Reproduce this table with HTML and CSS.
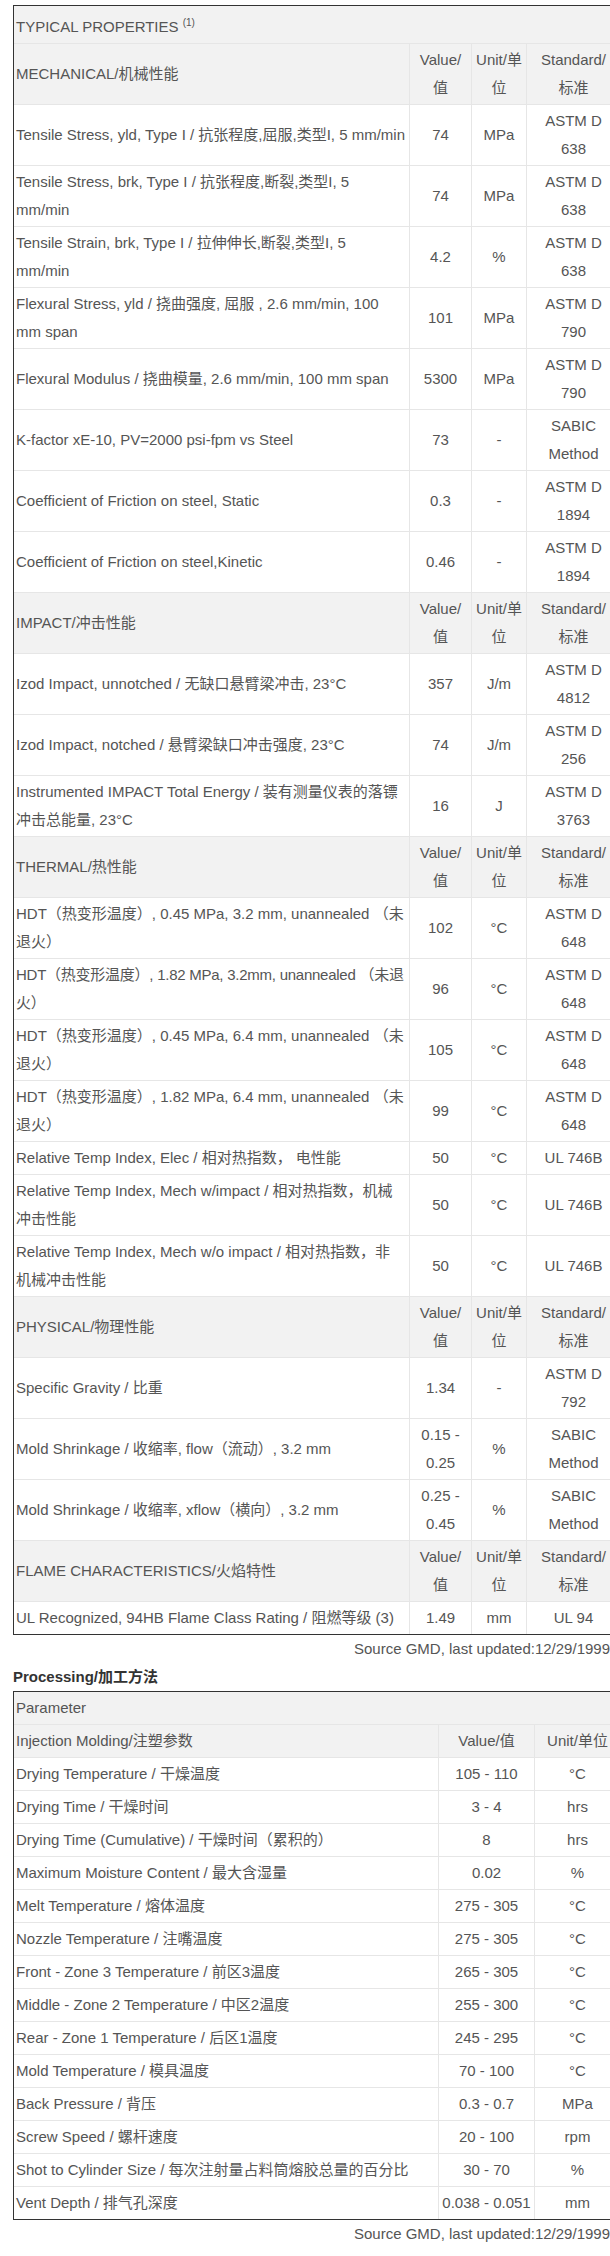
FILE: index.html
```html
<!DOCTYPE html>
<html lang="zh-CN">
<head>
  <meta charset="UTF-8">
  <meta name="viewport" content="width=device-width, initial-scale=1.0">
  <title>Typical Properties</title>
  <link rel="stylesheet" href="styles.css">
</head>
<body>
  <div class="ficha">
    <table class="tabela props">
      <colgroup>
        <col class="c-desc">
        <col class="c-val">
        <col class="c-unit">
        <col class="c-std">
      </colgroup>
      <tr class="titulo">
        <th colspan="4">TYPICAL PROPERTIES <sup>(1)</sup></th>
      </tr>
      <tr class="secao">
        <th>MECHANICAL/机械性能</th>
        <th>Value/<br>值</th>
        <th>Unit/单<br>位</th>
        <th>Standard/<br>标准</th>
      </tr>
      <tr><td>Tensile Stress, yld, Type I / 抗张程度,屈服,类型I, 5 mm/min</td><td>74</td><td>MPa</td><td>ASTM D<br>638</td></tr>
      <tr><td>Tensile Stress, brk, Type I / 抗张程度,断裂,类型I, 5<br>mm/min</td><td>74</td><td>MPa</td><td>ASTM D<br>638</td></tr>
      <tr><td>Tensile Strain, brk, Type I / 拉伸伸长,断裂,类型I, 5<br>mm/min</td><td>4.2</td><td>%</td><td>ASTM D<br>638</td></tr>
      <tr><td>Flexural Stress, yld / 挠曲强度, 屈服 , 2.6 mm/min, 100<br>mm span</td><td>101</td><td>MPa</td><td>ASTM D<br>790</td></tr>
      <tr><td>Flexural Modulus / 挠曲模量, 2.6 mm/min, 100 mm span</td><td>5300</td><td>MPa</td><td>ASTM D<br>790</td></tr>
      <tr><td>K-factor xE-10, PV=2000 psi-fpm vs Steel</td><td>73</td><td>-</td><td>SABIC<br>Method</td></tr>
      <tr><td>Coefficient of Friction on steel, Static</td><td>0.3</td><td>-</td><td>ASTM D<br>1894</td></tr>
      <tr><td>Coefficient of Friction on steel,Kinetic</td><td>0.46</td><td>-</td><td>ASTM D<br>1894</td></tr>

      <tr class="secao">
        <th>IMPACT/冲击性能</th>
        <th>Value/<br>值</th>
        <th>Unit/单<br>位</th>
        <th>Standard/<br>标准</th>
      </tr>
      <tr><td>Izod Impact, unnotched / 无缺口悬臂梁冲击, 23°C</td><td>357</td><td>J/m</td><td>ASTM D<br>4812</td></tr>
      <tr><td>Izod Impact, notched / 悬臂梁缺口冲击强度, 23°C</td><td>74</td><td>J/m</td><td>ASTM D<br>256</td></tr>
      <tr><td>Instrumented IMPACT Total Energy / 装有测量仪表的落镖<br>冲击总能量, 23°C</td><td>16</td><td>J</td><td>ASTM D<br>3763</td></tr>

      <tr class="secao">
        <th>THERMAL/热性能</th>
        <th>Value/<br>值</th>
        <th>Unit/单<br>位</th>
        <th>Standard/<br>标准</th>
      </tr>
      <tr><td>HDT（热变形温度）, 0.45 MPa, 3.2 mm, unannealed （未<br>退火）</td><td>102</td><td>°C</td><td>ASTM D<br>648</td></tr>
      <tr><td class="apertado">HDT（热变形温度）, 1.82 MPa, 3.2mm, unannealed （未退<br>火）</td><td>96</td><td>°C</td><td>ASTM D<br>648</td></tr>
      <tr><td>HDT（热变形温度）, 0.45 MPa, 6.4 mm, unannealed （未<br>退火）</td><td>105</td><td>°C</td><td>ASTM D<br>648</td></tr>
      <tr><td>HDT（热变形温度）, 1.82 MPa, 6.4 mm, unannealed （未<br>退火）</td><td>99</td><td>°C</td><td>ASTM D<br>648</td></tr>
      <tr><td>Relative Temp Index, Elec / 相对热指数， 电性能</td><td>50</td><td>°C</td><td>UL 746B</td></tr>
      <tr><td>Relative Temp Index, Mech w/impact / 相对热指数，机械<br>冲击性能</td><td>50</td><td>°C</td><td>UL 746B</td></tr>
      <tr><td>Relative Temp Index, Mech w/o impact / 相对热指数，非<br>机械冲击性能</td><td>50</td><td>°C</td><td>UL 746B</td></tr>

      <tr class="secao">
        <th>PHYSICAL/物理性能</th>
        <th>Value/<br>值</th>
        <th>Unit/单<br>位</th>
        <th>Standard/<br>标准</th>
      </tr>
      <tr><td>Specific Gravity / 比重</td><td>1.34</td><td>-</td><td>ASTM D<br>792</td></tr>
      <tr><td>Mold Shrinkage / 收缩率, flow（流动）, 3.2 mm</td><td>0.15 -<br>0.25</td><td>%</td><td>SABIC<br>Method</td></tr>
      <tr><td>Mold Shrinkage / 收缩率, xflow（横向）, 3.2 mm</td><td>0.25 -<br>0.45</td><td>%</td><td>SABIC<br>Method</td></tr>

      <tr class="secao">
        <th>FLAME CHARACTERISTICS/火焰特性</th>
        <th>Value/<br>值</th>
        <th>Unit/单<br>位</th>
        <th>Standard/<br>标准</th>
      </tr>
      <tr class="ultima"><td>UL Recognized, 94HB Flame Class Rating / 阻燃等级 (3)</td><td>1.49</td><td>mm</td><td>UL 94</td></tr>
    </table>
    <p class="fonte">Source GMD, last updated:12/29/1999</p>

    <h4 class="subtitulo">Processing/加工方法</h4>
    <table class="tabela proc">
      <colgroup>
        <col class="p-desc">
        <col class="p-val">
        <col class="p-unit">
      </colgroup>
      <tr class="secao">
        <th colspan="3">Parameter</th>
      </tr>
      <tr class="secao">
        <th>Injection Molding/注塑参数</th>
        <th>Value/值</th>
        <th>Unit/单位</th>
      </tr>
      <tr><td>Drying Temperature / 干燥温度</td><td>105 - 110</td><td>°C</td></tr>
      <tr><td>Drying Time / 干燥时间</td><td>3 - 4</td><td>hrs</td></tr>
      <tr><td>Drying Time (Cumulative) / 干燥时间（累积的）</td><td>8</td><td>hrs</td></tr>
      <tr><td>Maximum Moisture Content / 最大含湿量</td><td>0.02</td><td>%</td></tr>
      <tr><td>Melt Temperature / 熔体温度</td><td>275 - 305</td><td>°C</td></tr>
      <tr><td>Nozzle Temperature / 注嘴温度</td><td>275 - 305</td><td>°C</td></tr>
      <tr><td>Front - Zone 3 Temperature / 前区3温度</td><td>265 - 305</td><td>°C</td></tr>
      <tr><td>Middle - Zone 2 Temperature / 中区2温度</td><td>255 - 300</td><td>°C</td></tr>
      <tr><td>Rear - Zone 1 Temperature / 后区1温度</td><td>245 - 295</td><td>°C</td></tr>
      <tr><td>Mold Temperature / 模具温度</td><td>70 - 100</td><td>°C</td></tr>
      <tr><td>Back Pressure / 背压</td><td>0.3 - 0.7</td><td>MPa</td></tr>
      <tr><td>Screw Speed / 螺杆速度</td><td>20 - 100</td><td>rpm</td></tr>
      <tr><td>Shot to Cylinder Size / 每次注射量占料筒熔胶总量的百分比</td><td>30 - 70</td><td>%</td></tr>
      <tr class="ultima"><td>Vent Depth / 排气孔深度</td><td>0.038 - 0.051</td><td>mm</td></tr>
    </table>
    <p class="fonte">Source GMD, last updated:12/29/1999</p>
  </div>
</body>
</html>
```

FILE: styles.css
```css
body {
  margin: 0;
  overflow: hidden;
  font-family: "Liberation Sans", "Noto Sans CJK SC", sans-serif;
  font-size: 15px;
  line-height: 28px;
  color: #555;
  background-color: #fff;
}

.ficha {
  width: 607px;
  margin: 5px 0 0 13px;
}

.tabela {
  width: 607px;
  table-layout: fixed;
  border: 1px solid #333;
  border-collapse: separate;
  border-spacing: 0;
}

.tabela th,
.tabela td {
  padding: 2px 2px;
  border-right: 1px solid #e6e6e6;
  border-bottom: 1px solid #e6e6e6;
  vertical-align: middle;
  text-align: center;
  font-weight: normal;
}

.tabela th:first-child,
.tabela td:first-child {
  text-align: left;
}

.tabela td.apertado {
  letter-spacing: -0.25px;
  white-space: nowrap;
}

.tabela .ultima td {
  border-bottom: none;
}

.titulo th,
.secao th {
  background-color: #f2f2f2;
}

.titulo th {
  padding-top: 7px;
}

.titulo sup {
  font-size: 10px;
  line-height: 0;
}

.c-desc { width: 396px; }
.c-val { width: 62px; }
.c-unit { width: 55px; }
.c-std { width: 94px; }

.p-desc { width: 425px; }
.p-val { width: 96px; }
.p-unit { width: 86px; }

.fonte {
  margin: 0;
  padding-right: 10px;
  text-align: right;
}

.subtitulo {
  margin: 0;
  font-size: 15px;
  line-height: 28px;
  color: #333;
}
```
